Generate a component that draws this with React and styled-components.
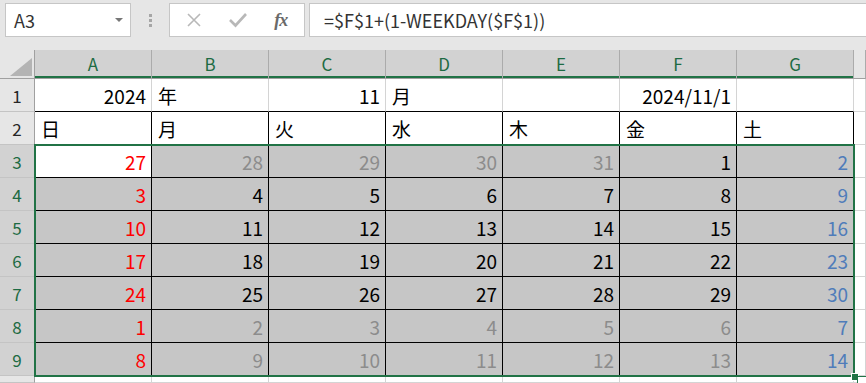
import styled, { createGlobalStyle } from "styled-components";

const GlobalStyle = createGlobalStyle`
  body {
    margin: 0;
    background: #e6e6e6;
    font-family: "Noto Sans CJK JP", "Noto Sans", sans-serif;
  }
`;

const Window = styled.div`
  width: 866px;
  height: 383px;
  overflow: hidden;
  background: #e6e6e6;
`;

const FormulaBar = styled.div`
  display: flex;
  align-items: flex-start;
  height: 50px;
  padding: 3px 0 0 5px;
  box-sizing: border-box;
`;

const NameBox = styled.div`
  display: flex;
  align-items: center;
  justify-content: space-between;
  width: 126px;
  height: 34px;
  box-sizing: border-box;
  padding: 0 7px 0 8px;
  background: #fff;
  border: 1px solid #c6c6c6;
  color: #333;
  font-size: 18px;
`;

const Caret = styled.span`
  width: 0;
  height: 0;
  border-left: 4px solid transparent;
  border-right: 4px solid transparent;
  border-top: 4px solid #777;
`;

const Grip = styled.div`
  display: flex;
  flex-direction: column;
  align-items: center;
  justify-content: center;
  gap: 2px;
  width: 38px;
  height: 34px;

  span {
    width: 3px;
    height: 3px;
    background: #a6a6a6;
  }
`;

const FuncBox = styled.div`
  display: flex;
  align-items: center;
  justify-content: space-around;
  width: 136px;
  height: 34px;
  box-sizing: border-box;
  padding: 0 4px 0 2px;
  background: #fff;
  border: 1px solid #c6c6c6;
`;

const Fx = styled.span`
  font-family: "Liberation Serif", serif;
  font-style: italic;
  font-weight: bold;
  font-size: 18px;
  color: #6a6a6a;
  letter-spacing: -1px;
`;

const FormulaInput = styled.div`
  flex: 1;
  display: flex;
  align-items: center;
  height: 34px;
  margin-left: 4px;
  box-sizing: border-box;
  padding-left: 14px;
  background: #fff;
  border: 1px solid #c6c6c6;
  border-right: none;
  color: #333;
  font-size: 18px;
`;

const Sheet = styled.div`
  position: relative;
  display: grid;
  grid-template-columns: 35px repeat(7, 117px) 1fr;
  grid-template-rows: 29px repeat(9, 33px) 1fr;
  height: 333px;
  background: #fff;
`;

const Corner = styled.div`
  position: relative;
  background: #e6e6e6;
  border-right: 1px solid #a0a0a0;
  border-bottom: 1px solid #a0a0a0;

  &::after {
    content: "";
    position: absolute;
    left: 10px;
    top: 8px;
    width: 22px;
    height: 18px;
    background: #b4b4b4;
    clip-path: polygon(0 100%, 100% 100%, 100% 0);
  }
`;

const ColHead = styled.div`
  display: flex;
  align-items: center;
  justify-content: center;
  background: ${(p) => (p.$selected ? "#d2d2d2" : "#e6e6e6")};
  border-right: 1px solid #ababab;
  border-bottom: 1px solid #a0a0a0;
  box-shadow: ${(p) => (p.$selected ? "inset 0 -2px 0 #217346" : "none")};
  color: ${(p) => (p.$selected ? "#1d6b43" : "#444")};
  font-size: 17px;
  padding-bottom: 2px;
`;

const RowHead = styled.div`
  display: flex;
  align-items: center;
  justify-content: center;
  background: ${(p) => (p.$selected ? "#d2d2d2" : "#e6e6e6")};
  border-right: 1px solid #a0a0a0;
  border-bottom: 1px solid #c4c4c4;
  color: ${(p) => (p.$selected ? "#1d6b43" : "#262626")};
  font-size: 17px;
`;

const Cell = styled.div`
  display: flex;
  align-items: center;
  justify-content: ${(p) => (p.$right ? "flex-end" : "flex-start")};
  padding: 0 5px 0 6px;
  overflow: hidden;
  white-space: nowrap;
  background: ${(p) => (p.$fill ? "#c6c6c6" : "#fff")};
  border-right: 1px solid ${(p) => (p.$gridRight ? "#000" : "#d4d4d4")};
  border-bottom: 1px solid ${(p) => (p.$gridBottom ? "#000" : "#d4d4d4")};
  color: ${(p) => p.$color || "#000"};
  font-size: 19px;
`;

const Selection = styled.div`
  position: absolute;
  grid-column: 2 / 9;
  grid-row: 4 / 11;
  inset: -1px;
  border: 2px solid #217346;
  pointer-events: none;
`;

const FillHandle = styled.span`
  position: absolute;
  right: -5px;
  bottom: -5px;
  width: 6px;
  height: 6px;
  background: #217346;
  outline: 1px solid #fff;
`;

const QuickAnalysis = styled.span`
  position: absolute;
  left: calc(100% + 4px);
  top: calc(100% + 1px);
  width: 14px;
  height: 12px;
  background: #fff;
  border: 1px solid #217346;
`;

const tones = {
  sun: "#ff0000",
  sat: "#4f7cba",
  other: "#8c8c8c",
  cur: "#000",
};

const weeks = [
  [27, 28, 29, 30, 31, 1, 2],
  [3, 4, 5, 6, 7, 8, 9],
  [10, 11, 12, 13, 14, 15, 16],
  [17, 18, 19, 20, 21, 22, 23],
  [24, 25, 26, 27, 28, 29, 30],
  [1, 2, 3, 4, 5, 6, 7],
  [8, 9, 10, 11, 12, 13, 14],
];

const cols = ["A", "B", "C", "D", "E", "F", "G"];
const dayNames = ["日", "月", "火", "水", "木", "金", "土"];
const row1 = [
  { t: "2024", r: true },
  { t: "年" },
  { t: "11", r: true },
  { t: "月" },
  { t: "" },
  { t: "2024/11/1", r: true },
  { t: "" },
];

const toneFor = (w, c) => {
  if (c === 0) return tones.sun;
  if (c === 6) return tones.sat;
  const other = (w === 0 && c < 5) || w >= 5;
  return other ? tones.other : tones.cur;
};

const CancelIcon = () => (
  <svg width="18" height="18" viewBox="0 0 18 18">
    <path d="M3 3 L15 15 M15 3 L3 15" stroke="#b8b8b8" strokeWidth="1.6" fill="none" />
  </svg>
);

const EnterIcon = () => (
  <svg width="20" height="18" viewBox="0 0 20 18">
    <path d="M2 9 L7.5 14.5 L18 3" stroke="#b8b8b8" strokeWidth="2.6" fill="none" />
  </svg>
);

export default function App() {
  return (
    <Window>
      <GlobalStyle />
      <FormulaBar>
        <NameBox>
          A3
          <Caret />
        </NameBox>
        <Grip>
          <span />
          <span />
          <span />
        </Grip>
        <FuncBox>
          <CancelIcon />
          <EnterIcon />
          <Fx>fx</Fx>
        </FuncBox>
        <FormulaInput>=$F$1+(1-WEEKDAY($F$1))</FormulaInput>
      </FormulaBar>

      <Sheet>
        <Corner />
        {cols.map((c) => (
          <ColHead key={c} $selected>
            {c}
          </ColHead>
        ))}
        <ColHead />

        <RowHead>1</RowHead>
        {row1.map((c, i) => (
          <Cell key={i} $right={c.r} $gridBottom>
            {c.t}
          </Cell>
        ))}
        <Cell />

        <RowHead>2</RowHead>
        {dayNames.map((d) => (
          <Cell key={d} $gridRight $gridBottom>
            {d}
          </Cell>
        ))}
        <Cell />

        {weeks.map((week, w) => [
          <RowHead key={`h${w}`} $selected>
            {w + 3}
          </RowHead>,
          ...week.map((n, c) => (
            <Cell
              key={`${w}-${c}`}
              $right
              $fill={!(w === 0 && c === 0)}
              $gridRight
              $gridBottom
              $color={toneFor(w, c)}
            >
              {n}
            </Cell>
          )),
          <Cell key={`x${w}`} />,
        ])}

        {/* row 10 is only a sliver at the bottom edge */}
        <RowHead />
        {cols.map((c) => (
          <Cell key={`r10${c}`} />
        ))}
        <Cell />

        <Selection>
          <FillHandle />
          <QuickAnalysis />
        </Selection>
      </Sheet>
    </Window>
  );
}
